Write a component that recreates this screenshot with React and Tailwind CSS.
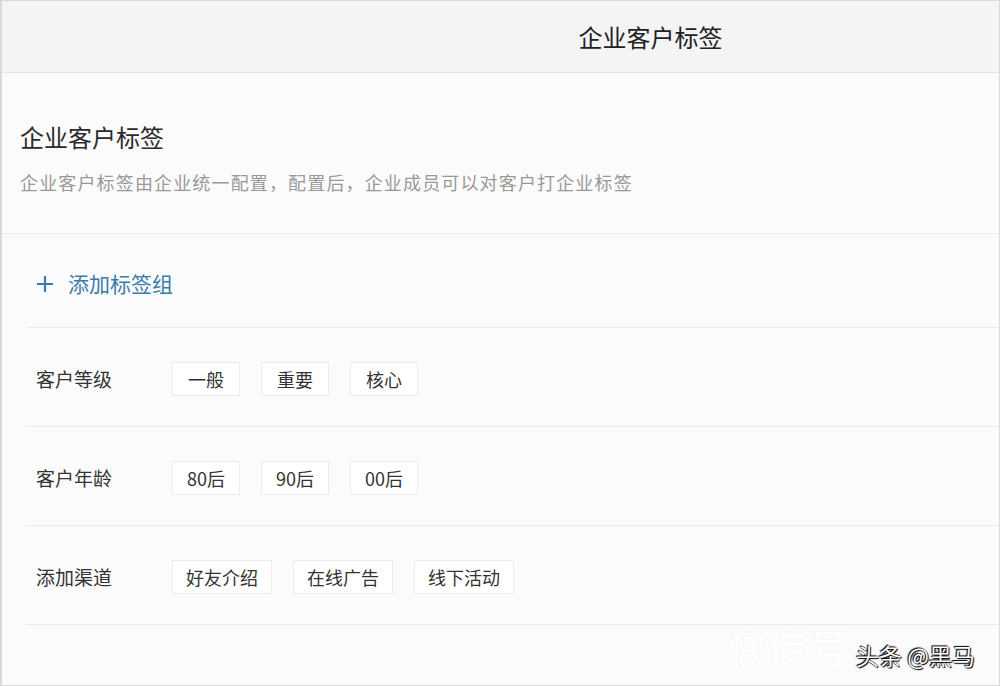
import React from "react";

const font = { fontFamily: '"Noto Sans CJK SC", "Noto Sans", sans-serif' };

const groups = [
  { name: "客户等级", tags: ["一般", "重要", "核心"] },
  { name: "客户年龄", tags: ["80后", "90后", "00后"] },
  { name: "添加渠道", tags: ["好友介绍", "在线广告", "线下活动"] },
];

// single tag chip
const Tag = ({ children }) => (
  <span className="h-[34px] min-w-[68px] px-[13px] flex items-center justify-center bg-white border border-[#ececec] text-[18px] text-[#333]">
    {children}
  </span>
);

export default function App() {
  return (
    <div
      className="relative w-[1000px] h-[686px] overflow-hidden bg-[#fcfbfc] border border-[#d9d9d9] border-l-2"
      style={font}
    >
      {/* Top bar */}
      <div className="h-[72px] flex items-center justify-center pl-[300px] bg-[#f4f4f4] border-b border-[#e6e6e6]">
        <h1 className="text-[24px] text-[#222]">企业客户标签</h1>
      </div>

      {/* Intro */}
      <div className="pl-[18px] pt-[48px] pb-[38px] border-b border-[#ebebeb]">
        <h2 className="text-[24px] leading-[32px] text-[#2a2a2a]">企业客户标签</h2>
        <p className="mt-[16px] text-[18px] leading-[26px] text-[#999] tracking-[1.15px]">
          企业客户标签由企业统一配置，配置后，企业成员可以对客户打企业标签
        </p>
      </div>

      {/* Add group */}
      <div className="ml-[26px] h-[94px] pt-[6px] flex items-center gap-[14px] pl-[8px] border-b border-[#ebebeb] text-[#3a7bab]">
        <svg width="18" height="18" viewBox="0 0 18 18" fill="none" stroke="currentColor" strokeWidth="2.2">
          <path d="M9 1v16M1 9h16" />
        </svg>
        <span className="text-[21px]">添加标签组</span>
      </div>

      {/* Tag groups */}
      {groups.map((g) => (
        <div
          key={g.name}
          className="ml-[24px] h-[99px] pt-[4px] flex items-center border-b border-[#ebebeb]"
        >
          <span className="w-[146px] pl-[10px] text-[19px] text-[#333]">{g.name}</span>
          <div className="flex gap-[21px]">
            {g.tags.map((t) => (
              <Tag key={t}>{t}</Tag>
            ))}
          </div>
        </div>
      ))}

      {/* Watermark */}
      <div className="absolute right-[24px] bottom-[18px] flex items-end gap-2">
        <span className="text-[40px] leading-none text-white [text-shadow:0_0_1px_#ececec]">快传号</span>
        <span className="text-[23px] leading-none text-white [text-shadow:0_0_1px_#000,1px_1px_1px_#000,-1px_-1px_1px_#000]">
          头条 @黑马
        </span>
      </div>
    </div>
  );
}
